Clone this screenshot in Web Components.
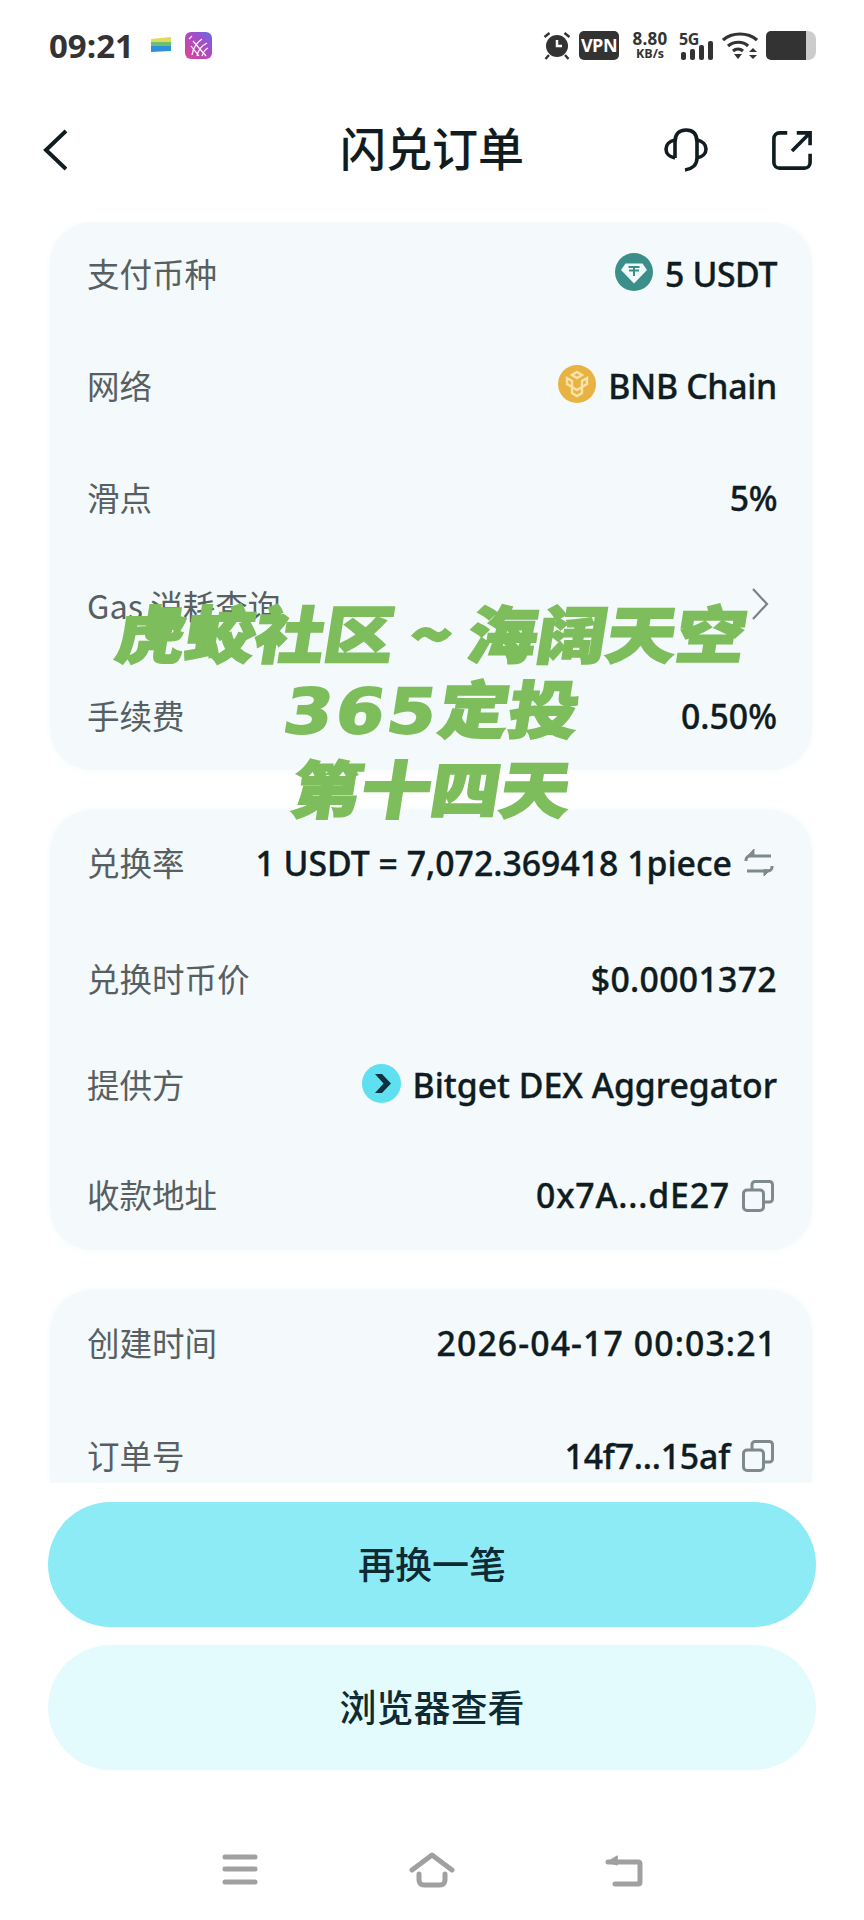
<!DOCTYPE html>
<html lang="zh">
<head>
<meta charset="utf-8">
<title>闪兑订单</title>
<style>
  html, body { margin: 0; background: #fff; }
</style>
</head>
<body>
<order-page>
  <status-bar slot="top"></status-bar>
  <app-header slot="top" title="闪兑订单"></app-header>

  <info-card>
    <info-row h="100" label="支付币种" value="5 USDT" lead="tether" track="-0.400"></info-row>
    <info-row h="124" label="网络" value="BNB Chain" lead="bnb" track="-0.300"></info-row>
    <info-row h="101" label="滑点" value="5%" track="-0.500"></info-row>
    <info-row h="114" label="Gas 消耗查询" trail="chevron"></info-row>
    <info-row h="107" style="margin-bottom:2px" label="手续费" value="0.50%"></info-row>
  </info-card>
  <info-card>
    <info-row h="103" label="兑换率" value="1 USDT = 7,072.369418 1piece" trail="swap"></info-row>
    <info-row h="128" label="兑换时币价" value="$0.0001372" track="0.300"></info-row>
    <info-row h="84" label="提供方" value="Bitget DEX Aggregator" lead="bitget"></info-row>
    <info-row h="137" style="margin-bottom:-12px" label="收款地址" value="0x7A...dE27" trail="copy" track="0.800"></info-row>
  </info-card>
  <info-card>
    <info-row h="103" label="创建时间" value="2026-04-17 00:03:21" track="1.100"></info-row>
    <info-row h="122" label="订单号" value="14f7...15af" trail="copy" track="-0.200"></info-row>
  </info-card>

  <action-button slot="actions" kind="primary">再换一笔</action-button>
  <action-button slot="actions" kind="soft">浏览器查看</action-button>
  <nav-bar slot="bottom"></nav-bar>
  <stream-watermark slot="over"></stream-watermark>
</order-page>

<script>
const ICONS = {
  tether: `<svg width="38" height="38" viewBox="0 0 38 38">
    <circle cx="19" cy="19" r="19" fill="#3a8f8a"/>
    <path d="M10.5 10.5h17l4.5 6.5-13 13.5L6 17z" fill="#eefbfa"/>
    <path d="M13.5 14h11M19 14v9M14 17.5h10" stroke="#3a8f8a" stroke-width="2" fill="none"/>
  </svg>`,
  bnb: `<svg width="38" height="38" viewBox="0 0 38 38">
    <circle cx="19" cy="19" r="19" fill="#e8b342"/>
    <g fill="none" stroke="#f9e2a8" stroke-width="2.400">
      <path d="M19 7l5 3-5 3-5-3z"/>
      <path d="M9 13l5 3v6l-5-3z"/>
      <path d="M29 13l-5 3v6l5-3z"/>
      <path d="M19 25l5-3v6l-5 3-5-3v-6z"/>
    </g>
  </svg>`,
  bitget: `<svg width="39" height="39" viewBox="0 0 39 39">
    <circle cx="19.500" cy="19.500" r="19.500" fill="#5fe0f0"/>
    <path d="M13 10h7l9 9.500-9 9.500h-7l8.500-9.500z" fill="#10303f"/>
  </svg>`,
  chevron: `<svg width="20" height="34" viewBox="0 0 20 34">
    <path d="M3 2l14 15L3 32" fill="none" stroke="#7b8388" stroke-width="2.200"/>
  </svg>`,
  swap: `<svg width="30" height="30" viewBox="0 0 30 30" fill="none" stroke="#7f8a8c" stroke-width="3">
    <path d="M27 9H6c-2 0-4 1.500-4 4v1"/>
    <path d="M3 24h21c2 0 4-1.500 4-4v-1"/>
    <path d="M10 2L4 8.500l6 .5z" fill="#7f8a8c" stroke-width="1"/>
    <path d="M20 29l6-6-6-.5z" fill="#7f8a8c" stroke-width="1"/>
  </svg>`,
  copy: `<svg width="32" height="32" viewBox="0 0 32 32" fill="none" stroke="#7f8a8c" stroke-width="3">
    <rect x="1.500" y="10" width="20" height="20.500" rx="3.500"/>
    <path d="M10 10V4.500c0-1.700 1.300-3 3-3h14.500c1.700 0 3 1.300 3 3V19c0 1.700-1.300 3-3 3H21.500"/>
  </svg>`
};

class OrderPage extends HTMLElement {
  constructor() {
    super();
    this.attachShadow({ mode: "open" });
  }

  connectedCallback() {
    this.shadowRoot.innerHTML = `
      <style>
        :host {
          display: flex;
          flex-direction: column;
          position: relative;
          width: 864px;
          height: 1920px;
          overflow: hidden;
          background: #fff;
          font-family: "Noto Sans", "Noto Sans CJK SC", sans-serif;
        }
        .scroll {
          height: 1261px;
          box-sizing: border-box;
          padding: 0 52px 0 50px;
          display: flex;
          flex-direction: column;
          gap: 40px;
          overflow: hidden;
          flex: none;
        }
        .actions {
          display: flex;
          flex-direction: column;
          gap: 18px;
          padding: 19px 48px 0;
        }
      </style>
      <slot name="top"></slot>
      <div class="scroll"><slot></slot></div>
      <div class="actions"><slot name="actions"></slot></div>
      <slot name="bottom"></slot>
      <slot name="over"></slot>
    `;
  }
}

class StatusBar extends HTMLElement {
  constructor() {
    super();
    this.attachShadow({ mode: "open" });
  }

  connectedCallback() {
    this.shadowRoot.innerHTML = `
      <style>
        :host {
          display: flex;
          align-items: center;
          height: 90px;
          box-sizing: border-box;
          padding: 0 48px 0 49px;
          color: #333;
        }
        .time {
          font: 700 33px "Open Sans", sans-serif;
          width: 101px;
          line-height: 33px;
        }
        .apps, .sys { display: flex; align-items: center; }
        .apps { gap: 13px; }
        .sys { margin-left: auto; }
        svg { display: block; }
        .vpn {
          width: 40px;
          height: 29px;
          margin-left: 8px;
          border-radius: 5px;
          background: #333;
          color: #fff;
          font: 700 18px/29px "Open Sans", sans-serif;
          letter-spacing: -0.5px;
          text-align: center;
        }
        .speed {
          width: 40px;
          margin-left: 11px;
          text-align: center;
          font-family: "Open Sans", sans-serif;
          font-weight: 700;
          line-height: 1;
        }
        .speed b { display: block; font-size: 17px; font-weight: 700; letter-spacing: .3px; }
        .speed span { display: block; font-size: 12.500px; margin-top: 1px; }
        .net { position: relative; width: 36px; height: 29px; margin-left: 9px; }
        .net span {
          position: absolute;
          left: 0;
          top: 0;
          font: 700 16px/16px "Open Sans", sans-serif;
          letter-spacing: -0.3px;
        }
        .net svg { position: absolute; left: 2px; bottom: 0; }
        .batt {
          width: 50px;
          height: 29px;
          margin-left: 8px;
          border-radius: 5px 8px 8px 5px;
          background: linear-gradient(90deg, #333 0 80%, #ccc 80%);
        }
      </style>
      <div class="time">09:21</div>
      <div class="apps">
        <svg width="22" height="18" viewBox="0 0 22 18">
          <path d="M1 3l20-2v5H1z" fill="#e3d85a"/>
          <path d="M1 6h20v4H1z" fill="#6cc06f"/>
          <path d="M1 10h20v5l-20 1z" fill="#2f8fd8"/>
        </svg>
        <svg width="27" height="27" viewBox="0 0 27 27">
          <defs>
            <linearGradient id="app" x1="0" y1="1" x2="1" y2="0">
              <stop offset="0" stop-color="#e0439a"/>
              <stop offset=".6" stop-color="#a84bc8"/>
              <stop offset="1" stop-color="#5f6fe0"/>
            </linearGradient>
          </defs>
          <rect width="27" height="27" rx="6" fill="url(#app)"/>
          <path d="M4 7l3-3M7 23c1-6 4-12 10-16M12 24c1-5 4-10 10-13M17 24c1-3 2-6 6-8M8 9l13 15M6 14l8 10" stroke="#fff" stroke-width="1.200" fill="none"/>
        </svg>
      </div>
      <div class="sys">
        <svg width="28" height="29" viewBox="0 0 28 29">
          <circle cx="14" cy="15" r="11" fill="#333"/>
          <path d="M14 9v6h5" stroke="#fff" stroke-width="2.500" fill="none"/>
          <path d="M1.500 6l5-4M26.500 6l-5-4M6 24l-3.500 4M22 24l3.500 4" stroke="#333" stroke-width="2.400"/>
        </svg>
        <div class="vpn">VPN</div>
        <div class="speed"><b>8.80</b><span>KB/s</span></div>
        <div class="net">
          <span>5G</span>
          <svg width="32" height="19" viewBox="0 0 32 19" fill="#333">
            <rect x="0" y="11" width="5" height="8" rx="2"/>
            <rect x="9" y="8" width="5" height="11" rx="2"/>
            <rect x="18" y="4" width="5" height="15" rx="2"/>
            <rect x="27" y="0" width="5" height="19" rx="2"/>
          </svg>
        </div>
        <svg style="margin-left:7px" width="36" height="29" viewBox="0 0 36 29" fill="none" stroke="#333" stroke-width="3.200">
          <path d="M1 9c9-8 25-8 34 0"/>
          <path d="M6 15c6-5 15-5 20 0"/>
          <path d="M11 20c3-2.500 7-2.500 10 0"/>
          <path d="M12 23h8l-4 5z" fill="#333" stroke="none"/>
          <path d="M27 21l4-4 4 4zM27 24l4 4 4-4z" fill="#333" stroke="none"/>
        </svg>
        <div class="batt"></div>
      </div>
    `;
  }
}

class AppHeader extends HTMLElement {
  constructor() {
    super();
    this.attachShadow({ mode: "open" });
  }

  connectedCallback() {
    const title = this.getAttribute("title") || "";
    this.shadowRoot.innerHTML = `
      <style>
        :host {
          display: grid;
          grid-template-columns: 1fr auto 1fr;
          align-items: center;
          height: 132px;
          box-sizing: border-box;
          padding: 0 52px 12px 52px;
          color: #101c20;
        }
        h1 {
          margin: 0 0 8px;
          font: 500 46px "Noto Sans CJK SC", sans-serif;
        }
        svg { display: block; }
        .back { margin-left: -9px; }
        .end { display: flex; justify-content: flex-end; align-items: center; gap: 64px; }
      </style>
      <svg class="back" width="24" height="42" viewBox="0 0 24 42" fill="none" stroke="#101c20" stroke-width="4">
        <path d="M23 2L3 21l20 19"/>
      </svg>
      <h1>${title}</h1>
      <div class="end">
        <svg width="44" height="44" viewBox="0 0 44 44" fill="none" stroke="#101c20" stroke-width="3.600">
          <path d="M11 30V14C11 6 15 2 22 2s11 4 11 12v16c0 7-5 11-12 12"/>
          <path d="M11 12C5 13 2 17 2 21s3 8 9 9"/>
          <path d="M33 12c6 1 9 5 9 9s-3 8-9 9"/>
        </svg>
        <svg width="40" height="40" viewBox="0 0 42 42" fill="none" stroke="#101c20" stroke-width="3.800">
          <path d="M16 3H8C4.500 3 2 5.500 2 9v25c0 3.500 2.500 6 6 6h26c3.500 0 6-2.500 6-6v-9"/>
          <path d="M21 22L39 4M26 3h14v13"/>
        </svg>
      </div>
    `;
  }
}

class InfoCard extends HTMLElement {
  constructor() {
    super();
    this.attachShadow({ mode: "open" });
  }

  connectedCallback() {
    this.shadowRoot.innerHTML = `
      <style>
        :host {
          display: block;
          flex: none;
          box-sizing: border-box;
          padding: 0 35px 0 37px;
          border-radius: 42px;
          background: #f4f9fb;
          box-shadow: 0 0 8px #f4f9fb;
        }
      </style>
      <slot></slot>
    `;
  }
}

class InfoRow extends HTMLElement {
  constructor() {
    super();
    this.attachShadow({ mode: "open" });
  }

  static get observedAttributes() {
    return ["label", "value", "lead", "trail", "h", "track"];
  }

  attributeChangedCallback(name, oldValue, newValue) {
    if (oldValue !== newValue && this.isConnected) {
      this.render();
    }
  }

  connectedCallback() {
    this.render();
  }

  render() {
    const label = this.getAttribute("label") || "";
    const value = this.getAttribute("value") || "";
    const lead = ICONS[this.getAttribute("lead")] || "";
    const trailName = this.getAttribute("trail") || "";
    const trail = ICONS[trailName] || "";
    const h = parseInt(this.getAttribute("h"), 10) || 110;
    const track = parseFloat(this.getAttribute("track")) || 0;

    this.shadowRoot.innerHTML = `
      <style>
        :host {
          display: flex;
          align-items: center;
          height: ${h}px;
        }
        .label {
          font: 400 32.500px "Noto Sans CJK SC", sans-serif;
          color: #575f63;
        }
        .right {
          margin-left: auto;
          display: flex;
          align-items: center;
          gap: 12px;
          color: #0f1c22;
          font: 500 33.800px "Noto Sans", "Noto Sans CJK SC", sans-serif;
          -webkit-text-stroke: 0.350px #0f1c22;
          letter-spacing: ${track}px;
          white-space: nowrap;
        }
        .right span { margin-top: 3px; }
        svg { display: block; flex: none; }
        .trail { margin: 0 3px 0 12px; display: flex; }
        .trail.chevron { margin-right: 7px; }
        .trail.copy { margin-top: 4px; }
      </style>
      <span class="label">${label}</span>
      <div class="right">${lead}${value ? `<span>${value}</span>` : ""}</div>
      ${trail ? `<span class="trail ${trailName}">${trail}</span>` : ""}
    `;
  }
}

class ActionButton extends HTMLElement {
  constructor() {
    super();
    this.attachShadow({ mode: "open" });
  }

  connectedCallback() {
    const soft = this.getAttribute("kind") === "soft";
    this.shadowRoot.innerHTML = `
      <style>
        :host {
          display: flex;
          align-items: center;
          justify-content: center;
          height: 125px;
          box-sizing: border-box;
          padding-bottom: 3px;
          border-radius: 63px;
          background: ${soft ? "#e4fbfe" : "#8cebf5"};
          color: #0e2a33;
          font: 500 37px "Noto Sans CJK SC", sans-serif;
        }
      </style>
      <slot></slot>
    `;
  }
}

class NavBar extends HTMLElement {
  constructor() {
    super();
    this.attachShadow({ mode: "open" });
  }

  connectedCallback() {
    this.shadowRoot.innerHTML = `
      <style>
        :host {
          display: flex;
          align-items: center;
          justify-content: space-between;
          box-sizing: border-box;
          height: 150px;
          padding: 50px 221px 0 222px;
        }
        svg { display: block; fill: none; stroke: #a0a0a0; stroke-width: 5; stroke-linecap: round; stroke-linejoin: round; }
      </style>
      <svg width="36" height="32" viewBox="0 0 36 32">
        <path d="M3 3h30M3 15h30M3 28h30"/>
      </svg>
      <svg width="46" height="36" viewBox="0 0 46 36">
        <path d="M3 18L23 3l20 15"/>
        <path d="M10 22v6c0 3 2 5 5 5h16c3 0 5-2 5-5v-6"/>
      </svg>
      <svg width="38" height="34" viewBox="0 0 38 34">
        <path d="M3 9h30c1.500 0 2 1 2 2v18c0 1-.5 2-2 2H10"/>
        <path d="M12 3L2 9l10 3z" fill="#a0a0a0" stroke-width="1"/>
      </svg>
    `;
  }
}

class StreamWatermark extends HTMLElement {
  constructor() {
    super();
    this.attachShadow({ mode: "open" });
  }

  connectedCallback() {
    this.shadowRoot.innerHTML = `
      <style>
        :host {
          position: absolute;
          left: 0;
          top: 594px;
          width: 864px;
          text-align: center;
          color: #7dbd5c;
          font: 900 62px/75px "Noto Sans CJK SC", sans-serif;
          -webkit-text-stroke: 2px #7dbd5c;
          pointer-events: none;
        }
        div { transform: scaleX(1.12) skewX(-8deg); white-space: pre; }
        .num { font-family: "DejaVu Sans", sans-serif; font-weight: 700; letter-spacing: 3px; }
      </style>
      <div>虎蛟社区 ~ 海阔天空</div>
      <div><span class="num">365</span>定投</div>
      <div>第十四天</div>
    `;
  }
}

customElements.define("order-page", OrderPage);
customElements.define("status-bar", StatusBar);
customElements.define("app-header", AppHeader);
customElements.define("info-card", InfoCard);
customElements.define("info-row", InfoRow);
customElements.define("action-button", ActionButton);
customElements.define("nav-bar", NavBar);
customElements.define("stream-watermark", StreamWatermark);
</script>
</body>
</html>
